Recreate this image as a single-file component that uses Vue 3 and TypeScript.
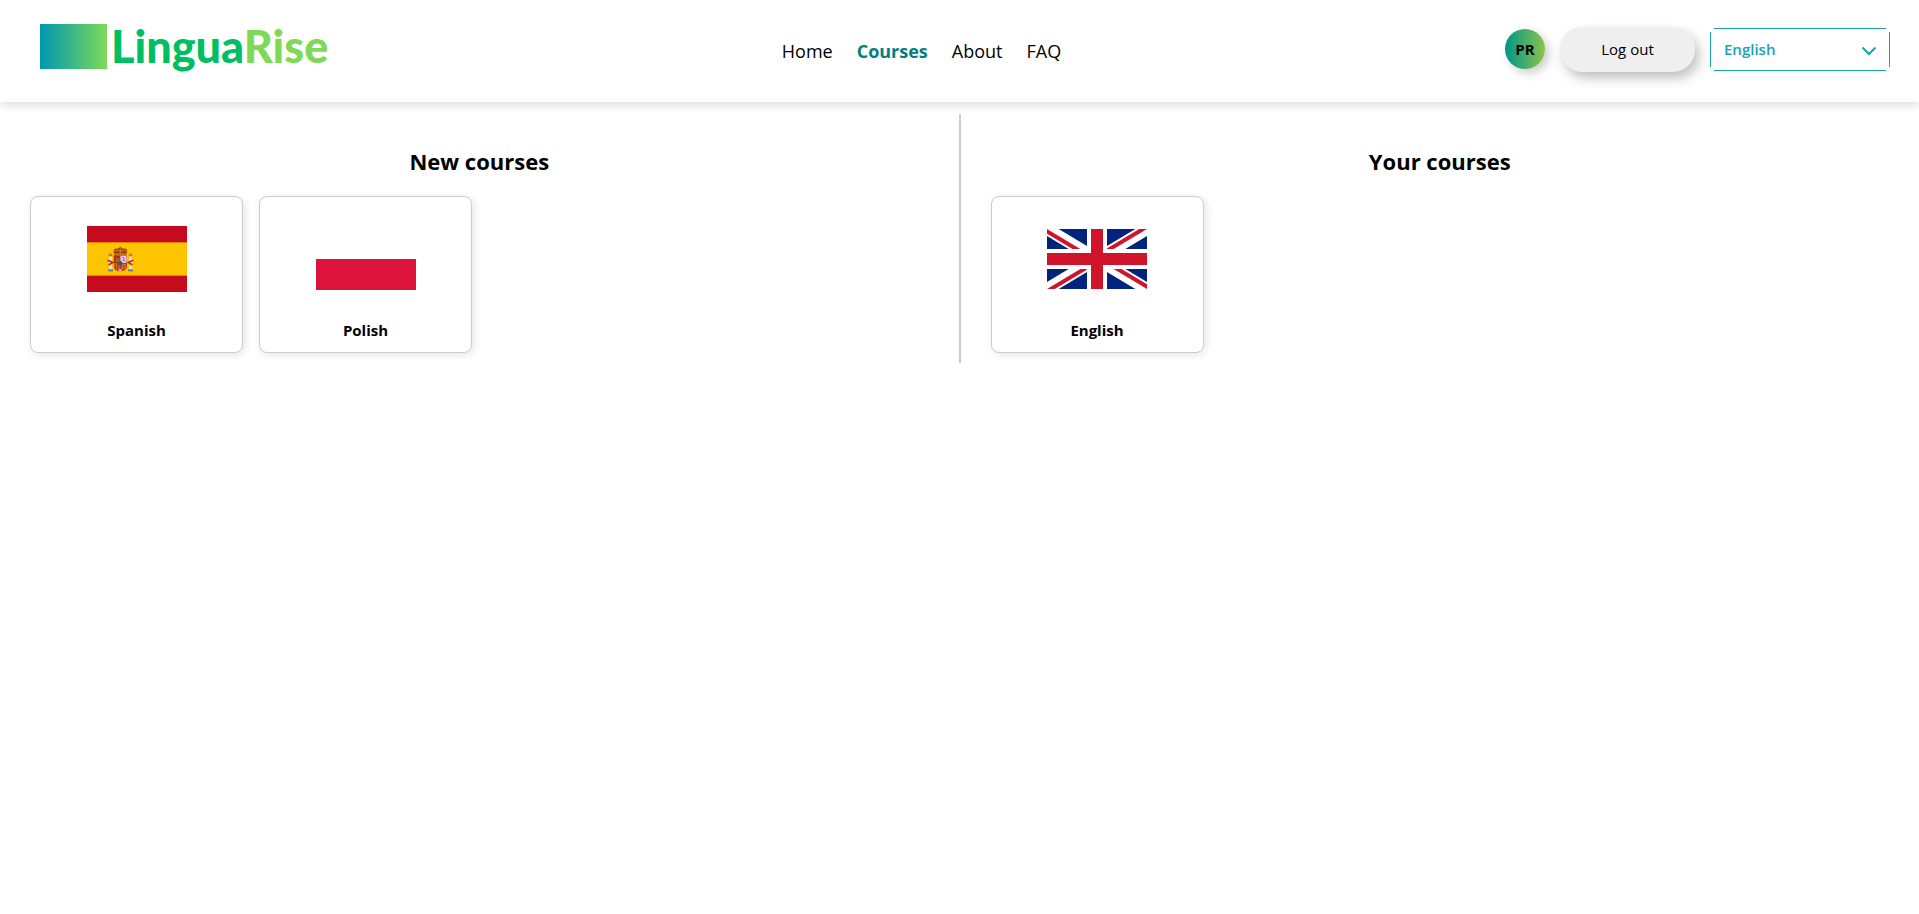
<script setup lang="ts">
import { ref } from 'vue'

interface NavItem {
  label: string
  href: string
  active?: boolean
}

interface Course {
  name: string
  flag: 'es' | 'pl' | 'gb'
}

interface CourseGroup {
  title: string
  courses: Course[]
}

const navItems: NavItem[] = [
  { label: 'Home', href: '#home' },
  { label: 'Courses', href: '#courses', active: true },
  { label: 'About', href: '#about' },
  { label: 'FAQ', href: '#faq' },
]

const groups: CourseGroup[] = [
  {
    title: 'New courses',
    courses: [
      { name: 'Spanish', flag: 'es' },
      { name: 'Polish', flag: 'pl' },
    ],
  },
  { title: 'Your courses', courses: [{ name: 'English', flag: 'gb' }] },
]

const languages: string[] = ['English', 'Polish', 'Spanish']
const language = ref<string>('English')
</script>

<template>
  <header class="header">
    <a class="logo" href="#home">
      <span class="logo-mark" aria-hidden="true"></span>
      <span class="logo-text">Lingua<span class="logo-accent">Rise</span></span>
    </a>

    <nav class="nav">
      <a
        v-for="item in navItems"
        :key="item.label"
        :href="item.href"
        class="nav-link"
        :class="{ active: item.active }"
        >{{ item.label }}</a
      >
    </nav>

    <div class="account">
      <button type="button" class="avatar">PR</button>
      <button type="button" class="logout">Log out</button>
      <div class="language">
        <select v-model="language" class="language-select" aria-label="Language">
          <option v-for="name in languages" :key="name" :value="name">{{ name }}</option>
        </select>
        <svg class="chevron" viewBox="0 0 16 10" aria-hidden="true">
          <path d="M1.5 1.5 8 8l6.5-6.5" fill="none" stroke="#17a2b8" stroke-width="2" />
        </svg>
      </div>
    </div>
  </header>

  <main class="columns">
    <template v-for="(group, index) in groups" :key="group.title">
      <div v-if="index > 0" class="divider"></div>
      <section class="column">
        <h2 class="column-title">{{ group.title }}</h2>
        <div class="cards">
          <a v-for="course in group.courses" :key="course.name" href="#course" class="card">
            <span class="flag-box">
              <svg v-if="course.flag === 'es'" class="flag" viewBox="0 0 300 198" aria-hidden="true">
                <rect width="300" height="198" fill="#c60b1e" />
                <rect y="48" width="300" height="102" fill="#e8820f" />
                <rect y="51" width="300" height="96" fill="#ffc400" />
                <!-- pillars -->
                <g>
                  <rect x="66" y="90" width="9" height="42" fill="#e4e0cf" />
                  <rect x="126" y="90" width="9" height="42" fill="#e4e0cf" />
                  <rect x="65" y="83" width="11" height="8" fill="#b9831f" />
                  <rect x="125" y="83" width="11" height="8" fill="#b9831f" />
                  <rect x="63" y="130" width="15" height="6" fill="#5d7d9c" />
                  <rect x="123" y="130" width="15" height="6" fill="#5d7d9c" />
                  <path d="M62 103l15 6-12 8M139 103l-15 6 12 8" fill="none" stroke="#bb2c1c" stroke-width="5" />
                </g>
                <!-- crown -->
                <path d="M82 86 79 74q4-8 12-6 9-6 18 0 9-3 12 6l-3 12z" fill="#a93a15" />
                <path d="M82 84h36M81 75q9-5 19 0 10-5 19 0M100 62v22" fill="none" stroke="#c58a18" stroke-width="3" />
                <path d="M97 65h6" stroke="#796a20" stroke-width="3" />
                <!-- shield -->
                <path d="M80 88h40v32q0 15-20 16-20-1-20-16z" fill="#b72a1b" />
                <path d="M100 89h19v22h-19z" fill="#e6c8d0" />
                <path d="M105 93l8 5-6 4 8 5" fill="none" stroke="#cc6c88" stroke-width="3" />
                <path d="M86 108V95h4v4h4v-4h4v13z" fill="#8b7222" />
                <path d="M82 112h17v22q-17-1-17-14z" fill="#cf942b" />
                <path d="M86 112v20M91 112v22M96 112v23" stroke="#b61f1b" stroke-width="3" />
                <path d="M104 115h12v12h-12zM104 115l12 12M116 115l-12 12" fill="none" stroke="#d69a28" stroke-width="2" />
                <path d="M92 130h16l-8 6z" fill="#d9d3b9" />
                <ellipse cx="100" cy="112" rx="6" ry="7" fill="#29577d" />
              </svg>
              <svg v-else-if="course.flag === 'pl'" class="flag" viewBox="0 0 100 62" aria-hidden="true">
                <rect width="100" height="31" fill="#ffffff" />
                <rect y="31" width="100" height="31" fill="#dc143c" />
              </svg>
              <svg v-else class="flag" viewBox="0 0 50 30" aria-hidden="true">
                <clipPath id="gb-quarters">
                  <path d="M25 15h25v15zM25 15v15H0zM25 15H0V0zM25 15V0h25z" />
                </clipPath>
                <rect width="50" height="30" fill="#00247d" />
                <path d="M0 0l50 30M50 0L0 30" stroke="#ffffff" stroke-width="6" />
                <path
                  d="M0 0l50 30M50 0L0 30"
                  stroke="#cf142b"
                  stroke-width="4"
                  clip-path="url(#gb-quarters)"
                />
                <path d="M25 0v30M0 15h50" stroke="#ffffff" stroke-width="10" />
                <path d="M25 0v30M0 15h50" stroke="#cf142b" stroke-width="6" />
              </svg>
            </span>
            <span class="card-name">{{ course.name }}</span>
          </a>
        </div>
      </section>
    </template>
  </main>
</template>

<style>
body {
  margin: 0;
  background: #ffffff;
  color: #000000;
  font-family: 'Open Sans', 'Noto Sans', sans-serif;
}
</style>

<style scoped>
.header {
  display: flex;
  align-items: center;
  justify-content: space-between;
  box-sizing: border-box;
  min-height: 102px;
  padding: 0 29px 0 30px;
  box-shadow: 0 4px 8px rgba(0, 0, 0, 0.12);
}

.logo {
  display: flex;
  align-items: center;
  gap: 4px;
  width: 298px;
  padding-left: 10px;
  padding-bottom: 10px;
  text-decoration: none;
}

.logo-mark {
  flex: none;
  width: 67px;
  height: 45px;
  background: linear-gradient(90deg, #0097b2, #7ed957);
}

.logo-text {
  color: #00bf63;
  font-family: Lato, 'Open Sans', sans-serif;
  font-size: 45px;
  font-weight: 900;
  line-height: 48px;
}

.logo-accent {
  color: #7ed957;
}

.nav {
  display: flex;
  align-items: center;
  gap: 24px;
}

.nav-link {
  color: #000000;
  font-size: 18px;
  font-weight: 500;
  line-height: 24px;
  text-decoration: none;
}

.nav-link.active {
  color: #008080;
  font-weight: 700;
}

.account {
  display: flex;
  align-items: center;
  gap: 15px;
  padding-bottom: 4px;
}

.avatar {
  width: 40px;
  height: 40px;
  padding: 0;
  border: 0;
  border-radius: 50%;
  background: linear-gradient(90deg, #009688, #8bc34a);
  box-shadow: 4px 4px 10px rgba(0, 0, 0, 0.2);
  color: #000000;
  font: 700 15px/24px 'Open Sans', sans-serif;
}

.logout {
  width: 135px;
  height: 45px;
  padding: 0;
  border: 0;
  border-radius: 22px;
  background: #efefef;
  box-shadow: 4px 6px 12px rgba(0, 0, 0, 0.25);
  color: #000000;
  font: 400 15px/24px 'Open Sans', sans-serif;
}

.language {
  position: relative;
}

/* Four separate edges leave the corners of the box open. */
.language-select {
  display: block;
  box-sizing: border-box;
  width: 180px;
  height: 43px;
  padding: 0 40px 0 14px;
  border: 0;
  appearance: none;
  background:
    linear-gradient(#17a2b8, #17a2b8) center top / calc(100% - 8px) 1px no-repeat,
    linear-gradient(#17a2b8, #17a2b8) center bottom / calc(100% - 8px) 1px no-repeat,
    linear-gradient(#17a2b8, #17a2b8) left center / 1px calc(100% - 8px) no-repeat,
    linear-gradient(#17a2b8, #17a2b8) right center / 1px calc(100% - 8px) no-repeat,
    #ffffff;
  color: #17a2b8;
  font: 600 15px/24px 'Open Sans', sans-serif;
}

.chevron {
  position: absolute;
  top: 18px;
  right: 13px;
  width: 16px;
  height: 10px;
  pointer-events: none;
}

.columns {
  display: grid;
  grid-template-columns: 1fr 2px 1fr;
  margin-top: 12px;
}

.divider {
  background: #cccccc;
}

.column {
  padding: 29px 30px 10px;
}

.column-title {
  margin: 0 0 17px;
  font-size: 22px;
  font-weight: 700;
  line-height: 36px;
  text-align: center;
}

.cards {
  display: flex;
  flex-wrap: wrap;
  gap: 16px;
}

.card {
  display: flex;
  flex-direction: column;
  align-items: center;
  box-sizing: border-box;
  width: 213px;
  padding: 12px 16px 10px;
  border: 1px solid #cccccc;
  border-radius: 8px;
  background: #ffffff;
  box-shadow: 2px 2px 8px rgba(0, 0, 0, 0.1);
  color: #000000;
  text-decoration: none;
}

.flag-box {
  display: flex;
  align-items: center;
  height: 100px;
  margin-bottom: 9px;
}

.flag {
  display: block;
  width: 100px;
}

.card-name {
  font-size: 15px;
  font-weight: 700;
  line-height: 24px;
}
</style>
